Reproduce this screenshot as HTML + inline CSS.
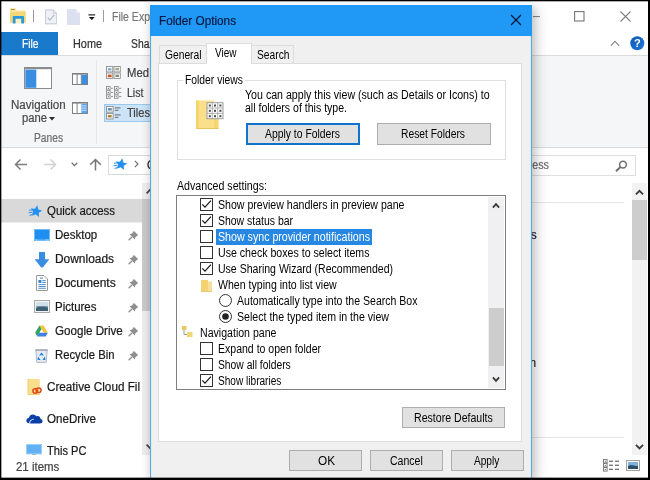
<!DOCTYPE html>
<html><head><meta charset="utf-8"><title>Folder Options</title>
<style>
html,body{margin:0;padding:0}
body{width:650px;height:480px;overflow:hidden;position:relative;background:#000;font-family:"Liberation Sans",sans-serif;font-size:12px}
.a{position:absolute}
.t{position:absolute;white-space:nowrap;line-height:16px;height:16px;transform-origin:0 50%}
.b{-webkit-text-stroke:.22px currentColor}
#root{position:absolute;left:0;top:0;width:650px;height:480px;overflow:hidden;will-change:transform}
</style></head><body><div id="root">
<!-- explorer window -->
<div class="a" style="left:1px;top:1px;width:647px;height:477px;background:#fff"></div>
<div class="a" style="left:1px;top:55px;width:647px;height:1px;background:#dadbdc"></div>
<div class="a" style="left:1px;top:56px;width:647px;height:91px;background:#f5f6f7"></div>
<div class="a" style="left:1px;top:147px;width:647px;height:1px;background:#dadbdc"></div>
<div class="a" style="left:1px;top:32px;width:57px;height:23px;background:#1979ca"></div>
<span class="t b" style="left:22.00px;top:36.00px;font-size:12px;color:#fff;transform:scaleX(0.8582);">File</span><span class="t b" style="left:72.70px;top:36.00px;font-size:12px;color:#333;transform:scaleX(0.9058);">Home</span><span class="t b" style="left:131.40px;top:36.00px;font-size:12px;color:#333;transform:scaleX(0.8614);">Sha</span><span class="t b" style="left:112.00px;top:8.60px;font-size:12px;color:#7a7a7a;transform:scaleX(0.8764);">File Exp</span>
<div class="a" style="left:33px;top:10px;width:1px;height:12px;background:#9a9a9a"></div>
<div class="a" style="left:103px;top:10px;width:1px;height:12px;background:#9a9a9a"></div>
<div class="a" style="left:96px;top:60px;width:1px;height:84px;background:#e6e7e8"></div>
<div class="a" style="left:104px;top:104px;width:60px;height:18px;background:#cce4f7;border:1px solid #99c9ef;box-sizing:border-box"></div>
<span class="t b" style="left:10.60px;top:97.40px;font-size:12px;color:#4a4a4a;transform:scaleX(0.9647);">Navigation</span><span class="t b" style="left:21.60px;top:110.30px;font-size:12px;color:#4a4a4a;transform:scaleX(0.9362);">pane</span><svg class="a" style="left:49.4px;top:117px" width="6" height="4" viewBox="0 0 6 4"><path d="M0 0 H6 L3 3.4Z" fill="#2b2b2b"/></svg><span class="t b" style="left:34.30px;top:130.00px;font-size:12px;color:#6d6d6d;transform:scaleX(0.8522);">Panes</span><span class="t b" style="left:127.30px;top:64.60px;font-size:12px;color:#424242;transform:scaleX(0.9424);">Med</span><span class="t b" style="left:127.30px;top:85.20px;font-size:12px;color:#424242;transform:scaleX(0.8776);">List</span><span class="t b" style="left:127.30px;top:105.00px;font-size:12px;color:#424242;transform:scaleX(0.9240);">Tiles</span>
<!-- address bar -->
<div class="a" style="left:108px;top:155px;width:60px;height:20px;border:1px solid #d9d9d9;box-sizing:border-box"></div>
<div class="a" style="left:500px;top:155px;width:136px;height:21px;border:1px solid #dfdfdf;box-sizing:border-box"></div>
<span class="t b" style="left:448.00px;top:156.80px;font-size:12px;color:#6d6d6d;transform:scaleX(0.8960);">Search Quick access</span>
<!-- nav pane -->
<span class="t b" style="left:146.60px;top:157.00px;font-size:12px;color:#222;transform:scaleX(0.9249);">Quick access</span>
<div class="a" style="left:1px;top:199px;width:141px;height:23px;background:#d9d9d9"></div><div class="a" style="left:1px;top:222px;width:141px;height:1px;background:#ececec"></div>
<div class="a" style="left:142px;top:183px;width:8px;height:272px;background:#efefef"></div>
<div class="a" style="left:142px;top:199px;width:8px;height:112px;background:#cbcbcb"></div>
<span class="t b" style="left:47.00px;top:203.00px;font-size:12px;color:#1a1a1a;transform:scaleX(0.9529);">Quick access</span><span class="t b" style="left:55.00px;top:227.00px;font-size:12px;color:#1a1a1a;transform:scaleX(0.9584);">Desktop</span><svg class="a" style="left:127.5px;top:229.5px" width="11" height="11" viewBox="0 0 10 10"><path d="M5.2 0.6 L9.4 4.8 L8.2 5.2 L6.6 6.8 L6.2 8.6 L1.4 3.8 L3.2 3.4 L4.8 1.8 Z" fill="#8f8f8f"/><path d="M3.6 6.4 L0.6 9.4" stroke="#8f8f8f" stroke-width="1.2"/></svg><span class="t b" style="left:55.00px;top:251.00px;font-size:12px;color:#1a1a1a;transform:scaleX(0.9937);">Downloads</span><svg class="a" style="left:127.5px;top:253.5px" width="11" height="11" viewBox="0 0 10 10"><path d="M5.2 0.6 L9.4 4.8 L8.2 5.2 L6.6 6.8 L6.2 8.6 L1.4 3.8 L3.2 3.4 L4.8 1.8 Z" fill="#8f8f8f"/><path d="M3.6 6.4 L0.6 9.4" stroke="#8f8f8f" stroke-width="1.2"/></svg><span class="t b" style="left:55.00px;top:275.00px;font-size:12px;color:#1a1a1a;">Documents</span><svg class="a" style="left:127.5px;top:277.5px" width="11" height="11" viewBox="0 0 10 10"><path d="M5.2 0.6 L9.4 4.8 L8.2 5.2 L6.6 6.8 L6.2 8.6 L1.4 3.8 L3.2 3.4 L4.8 1.8 Z" fill="#8f8f8f"/><path d="M3.6 6.4 L0.6 9.4" stroke="#8f8f8f" stroke-width="1.2"/></svg><span class="t b" style="left:55.00px;top:299.00px;font-size:12px;color:#1a1a1a;transform:scaleX(0.9571);">Pictures</span><svg class="a" style="left:127.5px;top:301.5px" width="11" height="11" viewBox="0 0 10 10"><path d="M5.2 0.6 L9.4 4.8 L8.2 5.2 L6.6 6.8 L6.2 8.6 L1.4 3.8 L3.2 3.4 L4.8 1.8 Z" fill="#8f8f8f"/><path d="M3.6 6.4 L0.6 9.4" stroke="#8f8f8f" stroke-width="1.2"/></svg><span class="t b" style="left:55.00px;top:323.00px;font-size:12px;color:#1a1a1a;transform:scaleX(0.9681);">Google Drive</span><svg class="a" style="left:127.5px;top:325.5px" width="11" height="11" viewBox="0 0 10 10"><path d="M5.2 0.6 L9.4 4.8 L8.2 5.2 L6.6 6.8 L6.2 8.6 L1.4 3.8 L3.2 3.4 L4.8 1.8 Z" fill="#8f8f8f"/><path d="M3.6 6.4 L0.6 9.4" stroke="#8f8f8f" stroke-width="1.2"/></svg><span class="t b" style="left:55.00px;top:347.00px;font-size:12px;color:#1a1a1a;transform:scaleX(0.9391);">Recycle Bin</span><svg class="a" style="left:127.5px;top:349.5px" width="11" height="11" viewBox="0 0 10 10"><path d="M5.2 0.6 L9.4 4.8 L8.2 5.2 L6.6 6.8 L6.2 8.6 L1.4 3.8 L3.2 3.4 L4.8 1.8 Z" fill="#8f8f8f"/><path d="M3.6 6.4 L0.6 9.4" stroke="#8f8f8f" stroke-width="1.2"/></svg><span class="t b" style="left:47.00px;top:379.00px;font-size:12px;color:#1a1a1a;transform:scaleX(0.9751);">Creative Cloud Fil</span><span class="t b" style="left:47.00px;top:411.00px;font-size:12px;color:#1a1a1a;transform:scaleX(0.9667);">OneDrive</span><span class="t b" style="left:47.00px;top:443.00px;font-size:12px;color:#1a1a1a;transform:scaleX(0.9253);">This PC</span><span class="t b" style="left:16.30px;top:459.00px;font-size:12px;color:#444;transform:scaleX(0.9546);">21 items</span>
<!-- content right -->
<div class="a" style="left:532px;top:202px;width:92px;height:1px;background:#e5e5e5"></div>
<div class="a" style="left:532px;top:437px;width:92px;height:1px;background:#e5e5e5"></div>
<div class="a" style="left:632px;top:183px;width:15px;height:272px;background:#f2f2f2"></div>
<div class="a" style="left:632px;top:200px;width:15px;height:60px;background:#cdcdcd"></div>
<span class="t b" style="left:497.00px;top:227.20px;font-size:12px;color:#141c3c;transform:scaleX(0.9896);">Folders</span><span class="t b" style="left:490.00px;top:354.50px;font-size:12px;color:#1a1a1a;transform:scaleX(0.8956);">Documen</span><!-- title bar icons -->
<svg class="a" style="left:10px;top:8px" width="16" height="16" viewBox="0 0 16 16"><path d="M0 .3 H5.6 L6.6 2.6 H15.6 V14.6 H0Z" fill="#f7e39a"/><path d="M0 4 H15.6 V14.6 H0Z" fill="#f4d878"/><rect x="1" y="1" width="3.6" height="1" fill="#9a8a4c"/><path d="M5.4 15.4 V10.6 H11.4 V15.4Z" fill="#f8efc8"/><path d="M2.8 15.4 V9 Q2.8 8 3.8 8 H13 Q14 8 14 9 V15.4 H11.3 V10.7 H5.5 V15.4Z" fill="#2a98dc"/></svg>
<svg class="a" style="left:45px;top:8.8px" width="12.2" height="15.8" viewBox="0 0 14 17"><path d="M.5 .5 H9.5 L13.5 4.5 V16.5 H.5Z" fill="#eff1f7" stroke="#b9c0ce"/><path d="M9.5 .5 V4.5 H13.5" fill="none" stroke="#c3c9d4"/><path d="M3.2 9.5 L5.8 12.2 L10.6 6.2" fill="none" stroke="#b4bccb" stroke-width="1.5"/></svg>
<svg class="a" style="left:67px;top:9px" width="13" height="16" viewBox="0 0 13 16"><path d="M0 0 H9 V4 H13 V16 H0Z" fill="#dde0ee"/><path d="M9 0 L13 4 H9Z" fill="#eceef6"/></svg>
<svg class="a" style="left:88px;top:14.3px" width="7.6" height="6.6" viewBox="0 0 9 7"><rect x="0.5" y="0" width="8" height="1.3" fill="#111"/><path d="M1 3 H8 L4.5 6.6Z" fill="#111"/></svg>
<!-- ribbon: navigation pane big icon -->
<svg class="a" style="left:24px;top:67px" width="28" height="22" viewBox="0 0 28 22"><rect x=".5" y="1" width="27" height="20.5" fill="#fff" stroke="#8c8c8c"/><rect x="0" y="0" width="28" height="2.2" fill="#8c8c8c"/><rect x="1.3" y="2.6" width="11" height="18.2" fill="#3a8ee2"/></svg>
<svg class="a" style="left:72px;top:73px" width="16" height="12" viewBox="0 0 16 12"><rect x=".5" y=".5" width="15" height="11" fill="#fff" stroke="#808080"/><rect x="0" y="0" width="16" height="1.6" fill="#808080"/><rect x="4.6" y="1" width="1" height="10.5" fill="#808080"/><rect x="9.4" y="1.8" width="5.8" height="9.4" fill="#3a8ee2"/><rect x="8.8" y="1" width=".8" height="10.5" fill="#808080"/></svg>
<svg class="a" style="left:72px;top:102px" width="16" height="12" viewBox="0 0 16 12"><rect x=".5" y=".5" width="15" height="11" fill="#fff" stroke="#808080"/><rect x="0" y="0" width="16" height="1.6" fill="#808080"/><rect x="4.6" y="1" width="1" height="10.5" fill="#808080"/><rect x="9.4" y="1.8" width="5.8" height="9.4" fill="#5aa3ea"/><g fill="#dcecfb"><rect x="10" y="3.4" width="4.6" height=".9"/><rect x="10" y="5.6" width="4.6" height=".9"/><rect x="10" y="7.8" width="4.6" height=".9"/></g></svg>
<!-- ribbon: layout icons -->
<svg class="a" style="left:106px;top:66px" width="15" height="13" viewBox="0 0 15 13"><g fill="#fff" stroke="#8e8e8e" stroke-width=".9"><rect x=".5" y=".5" width="6.3" height="5.4"/><rect x="8" y=".5" width="6.3" height="5.4"/><rect x=".5" y="7" width="6.3" height="5.4"/><rect x="8" y="7" width="6.3" height="5.4"/></g><rect x="1.8" y="2.2" width="3.6" height="2.2" fill="#7aa9c9"/><rect x="9.4" y="1.8" width="3.6" height="2.6" fill="#a8a58a"/><rect x="1.8" y="8.6" width="3.8" height="2.6" fill="#c65a2c"/><rect x="9.4" y="8.6" width="3.6" height="2.4" fill="#8d8d7a"/></svg>
<svg class="a" style="left:106px;top:86px" width="16" height="13" viewBox="0 0 16 13"><g fill="#fff" stroke="#8e8e8e" stroke-width=".9"><rect x=".5" y=".5" width="3.6" height="3.4"/><rect x=".5" y="4.7" width="3.6" height="3.4"/><rect x=".5" y="8.9" width="3.6" height="3.4"/><rect x="8.5" y=".5" width="3.6" height="3.4"/><rect x="8.5" y="4.7" width="3.6" height="3.4"/><rect x="8.5" y="8.9" width="3.6" height="3.4"/></g><g fill="#555"><rect x="1.8" y="1.8" width="1" height="1"/><rect x="1.8" y="6" width="1" height="1"/><rect x="1.8" y="10.2" width="1" height="1"/><rect x="9.8" y="1.8" width="1" height="1"/><rect x="9.8" y="6" width="1" height="1"/><rect x="9.8" y="10.2" width="1" height="1"/></g><g fill="#8e8e8e"><rect x="5" y="1.8" width="2" height=".9"/><rect x="5" y="6" width="2" height=".9"/><rect x="5" y="10.2" width="2" height=".9"/><rect x="13" y="1.8" width="2.4" height=".9"/><rect x="13" y="6" width="2.4" height=".9"/><rect x="13" y="10.2" width="2.4" height=".9"/></g></svg>
<svg class="a" style="left:106px;top:106px" width="15" height="14" viewBox="0 0 15 14"><g fill="#fff" stroke="#8e8e8e" stroke-width=".9"><rect x=".5" y=".5" width="6.6" height="5.6"/><rect x=".5" y="7.4" width="6.6" height="5.6"/></g><rect x="1.8" y="2" width="4" height="2.6" fill="#6c93b0"/><rect x="1.8" y="8.9" width="4" height="2.6" fill="#a8a04c"/><rect x="2.4" y="9.6" width="2" height="1.4" fill="#c65a2c"/><g fill="#6a6a6a"><rect x="8.8" y="1.4" width="5.8" height="1"/><rect x="8.8" y="3.8" width="3.6" height="1"/><rect x="8.8" y="8.4" width="5.8" height="1"/><rect x="8.8" y="10.8" width="3.6" height="1"/></g></svg>
<!-- address bar arrows -->
<svg class="a" style="left:14px;top:158px" width="14" height="13" viewBox="0 0 14 13"><path d="M13 6.5 H2 M6.5 1.5 L1.5 6.5 L6.5 11.5" fill="none" stroke="#7d7d7d" stroke-width="1.5"/></svg>
<svg class="a" style="left:43px;top:158px" width="14" height="13" viewBox="0 0 14 13"><path d="M1 6.5 H12 M7.5 1.5 L12.5 6.5 L7.5 11.5" fill="none" stroke="#d2d2d2" stroke-width="1.5"/></svg>
<svg class="a" style="left:71px;top:162px" width="7" height="5" viewBox="0 0 7 5"><path d="M.7 .8 L3.5 3.6 L6.3 .8" fill="none" stroke="#707070" stroke-width="1.3"/></svg>
<svg class="a" style="left:89px;top:158px" width="13" height="13" viewBox="0 0 13 13"><path d="M6.5 12.5 V2 M1.2 6.8 L6.5 1.5 L11.8 6.8" fill="none" stroke="#757575" stroke-width="1.5"/></svg>
<svg class="a" style="left:113px;top:157px" width="14" height="14" viewBox="0 0 14 14"><path d="M9.29 1.20 L10.29 5.39 L14.44 6.52 L10.76 8.76 L10.96 13.06 L7.70 10.26 L3.67 11.78 L5.33 7.80 L2.64 4.44 L6.93 4.79Z" fill="#2490ee"/><path d="M1 6.2 L4.4 6 M.6 8.8 L4.6 8.2 M1.6 11.6 L5 10.2" stroke="#3a97ea" stroke-width="1.1" fill="none"/></svg>
<svg class="a" style="left:134px;top:160px" width="5" height="8" viewBox="0 0 5 8"><path d="M.8 .8 L4 4 L.8 7.2" fill="none" stroke="#707070" stroke-width="1.2"/></svg>
<!-- nav: quick access star -->
<svg class="a" style="left:28px;top:204px" width="14" height="14" viewBox="0 0 14 14"><path d="M9.29 1.20 L10.29 5.39 L14.44 6.52 L10.76 8.76 L10.96 13.06 L7.70 10.26 L3.67 11.78 L5.33 7.80 L2.64 4.44 L6.93 4.79Z" fill="#2490ee"/><path d="M1 6.2 L4.4 6 M.6 8.8 L4.6 8.2 M1.6 11.6 L5 10.2" stroke="#3a97ea" stroke-width="1.1" fill="none"/></svg>
<!-- nav icons -->
<svg class="a" style="left:34px;top:229px" width="16" height="12" viewBox="0 0 16 12"><rect x="0" y="0" width="16" height="12" fill="#6cbcf7"/><rect x="1" y="1" width="14" height="9.4" fill="#1e8ff0"/><g fill="#fff"><rect x="2" y="10.6" width="1" height=".8"/><rect x="12" y="10.6" width="1" height=".8"/><rect x="13.6" y="10.6" width="1" height=".8"/></g></svg>
<svg class="a" style="left:34px;top:251.5px" width="16" height="16" viewBox="0 0 16 16"><path d="M5 0 H11 V7.3 H15.4 L8.8 15.4 H7.2 L.6 7.3 H5Z" fill="#3a8ee2"/></svg>
<svg class="a" style="left:36px;top:275px" width="12" height="16" viewBox="0 0 12 16"><path d="M.5 .5 H8 L11.5 4 V15.5 H.5Z" fill="#fff" stroke="#9a9a9a"/><g fill="#3f86c9"><rect x="4" y="2.6" width="3" height="1"/><rect x="2.4" y="5" width="3" height="3"/><rect x="6.2" y="5.2" width="3.6" height=".9"/><rect x="6.2" y="7" width="3.6" height=".9"/><rect x="2.4" y="9.2" width="7.4" height=".9"/><rect x="2.4" y="11" width="7.4" height=".9"/><rect x="2.4" y="12.8" width="7.4" height=".9"/></g></svg>
<svg class="a" style="left:34px;top:300px" width="16" height="13" viewBox="0 0 16 13"><rect x=".5" y=".5" width="15" height="12" fill="#f4f4f4" stroke="#a9a9a9"/><rect x="2" y="2" width="12" height="9" fill="#cfe0ea"/><rect x="2" y="6.2" width="12" height="4.8" fill="#3d6174"/><path d="M2 8 Q6 5.4 14 7.4 V6.2 H2Z" fill="#8fb0c2"/></svg>
<svg class="a" style="left:35px;top:324.6px" width="13" height="12.2" viewBox="0 0 14 13"><path d="M4.8 .4 H9.2 L13.8 8.4 H9.4Z" fill="#f6c338"/><path d="M4.8 .4 L.2 8.4 L2.4 12.2 L7 4.2Z" fill="#2fa463"/><path d="M4.6 8.4 H13.8 L11.6 12.2 H2.4Z" fill="#3f7fe0"/></svg>
<svg class="a" style="left:35.3px;top:349px" width="13" height="14" viewBox="0 0 13 14"><path d="M.8 1 H12.2 L11.2 13.4 H1.8Z" fill="#e3eaf3" stroke="#aab2be" stroke-width=".9"/><rect x=".3" y=".4" width="12.4" height="1.3" fill="#9aa2ae"/><path d="M6.5 3.4 L8.9 6.6 H4.1Z M3 7.4 L5.6 11 H2.6Z M10 7.4 L10.4 11 H7.4Z" fill="#1e7fe0"/><circle cx="6.5" cy="7.6" r="1.3" fill="#e3eaf3"/></svg>
<svg class="a" style="left:27px;top:378.6px" width="16" height="17" viewBox="0 0 16 17"><path d="M1 0 H11.4 Q12.8 0 12.8 1.4 V15.6 H1Z" fill="#f9df8c"/><path d="M1 0 V15.6 H12.8" fill="none" stroke="#ecc864" stroke-width=".9"/><g fill="none" stroke="#e2491b" stroke-width="1.5"><ellipse cx="8.2" cy="12" rx="2.3" ry="2.2"/><ellipse cx="11.6" cy="11.2" rx="2.5" ry="2.3"/></g></svg>
<svg class="a" style="left:26px;top:413px" width="17" height="11" viewBox="0 0 17 11"><path d="M4.6 10.6 Q.3 10.6 .3 7.6 Q.3 5.2 3 4.8 Q3.6 1.4 7 1.4 Q9.2 1.4 10.4 3.2 Q14 2.4 14.6 6 Q16.8 6.4 16.6 8.6 Q16.4 10.6 14 10.6Z" fill="#0b3fa8"/><path d="M3.6 10.6 Q3.2 7 6.6 6.4 Q7.2 6.2 7.8 6.4" fill="none" stroke="#fff" stroke-width=".9"/></svg>
<svg class="a" style="left:26px;top:444px" width="16" height="11" viewBox="0 0 16 11"><rect x="0" y="0" width="16" height="10.4" fill="#9ad0f8"/><rect x="1" y="1" width="14" height="8.4" fill="#62b2f3"/><rect x="6" y="10.2" width="4" height=".8" fill="#9aa"/></svg>
<!-- search magnifier -->
<svg class="a" style="left:615px;top:160px" width="13" height="12" viewBox="0 0 13 12"><circle cx="8" cy="4.6" r="3.4" fill="none" stroke="#707070" stroke-width="1.5"/><path d="M5.4 7 L1 11.2" stroke="#707070" stroke-width="1.9"/></svg>
<!-- explorer window controls -->
<svg class="a" style="left:532.5px;top:15.6px" width="7" height="2" viewBox="0 0 7 2"><rect width="7" height="1.1" fill="#8a8a8a"/></svg>
<svg class="a" style="left:574px;top:11px" width="11" height="11" viewBox="0 0 11 11"><rect x=".6" y=".6" width="9.4" height="9.4" fill="none" stroke="#777" stroke-width="1.1"/></svg>
<svg class="a" style="left:620px;top:11px" width="11" height="11" viewBox="0 0 11 11"><path d="M.5 .5 L10.5 10.5 M10.5 .5 L.5 10.5" stroke="#808080" stroke-width="1.1" fill="none"/></svg>
<svg class="a" style="left:610px;top:40px" width="10" height="7" viewBox="0 0 10 7"><path d="M.8 5.8 L5 1.4 L9.2 5.8" fill="none" stroke="#858585" stroke-width="1.1"/></svg>
<svg class="a" style="left:630px;top:36px" width="15" height="15" viewBox="0 0 15 15"><defs><linearGradient id="hg" x1="0" y1="0" x2="1" y2="1"><stop offset="0" stop-color="#0f58b4"/><stop offset="1" stop-color="#1c78dc"/></linearGradient></defs><circle cx="7.3" cy="7.3" r="7" fill="url(#hg)"/><text x="7.3" y="11.3" text-anchor="middle" font-family="Liberation Sans, sans-serif" font-weight="700" font-size="11" fill="#fff">?</text></svg>
<!-- scrollbar arrows -->
<svg class="a" style="left:635.3px;top:188.6px" width="9" height="7.2" viewBox="0 0 10 8"><path d="M1 6 L5 2 L9 6" fill="none" stroke="#3a3a3a" stroke-width="2"/></svg>
<svg class="a" style="left:635.3px;top:443.2px" width="9" height="7.2" viewBox="0 0 10 8"><path d="M1 2 L5 6 L9 2" fill="none" stroke="#3a3a3a" stroke-width="2"/></svg>
<svg class="a" style="left:145.6px;top:187px" width="8" height="8" viewBox="0 0 8 8"><path d="M.6 6.4 L4.6 2.2 L8 5.8" fill="none" stroke="#404040" stroke-width="1.7"/></svg>
<svg class="a" style="left:145.6px;top:443px" width="8" height="8" viewBox="0 0 8 8"><path d="M.6 1.6 L4.6 5.8 L8 2.2" fill="none" stroke="#404040" stroke-width="1.7"/></svg>
<!-- status bar view icons -->
<svg class="a" style="left:603px;top:459px" width="17" height="13" viewBox="0 0 17 13"><g fill="#fff" stroke="#808080" stroke-width="1"><rect x=".5" y=".5" width="3.6" height="3.4"/><rect x=".5" y="4.5" width="3.6" height="3.4"/><rect x=".5" y="8.5" width="3.6" height="3.6"/></g><g fill="#555"><rect x="1.8" y="1.8" width="1" height="1"/><rect x="1.8" y="5.8" width="1" height="1"/><rect x="1.8" y="9.9" width="1" height="1"/></g><g fill="#6e6e6e"><rect x="6" y="1.6" width="4" height="1.3"/><rect x="12" y="1.6" width="4" height="1.3"/><rect x="6" y="5.6" width="4" height="1.3"/><rect x="12" y="5.6" width="4" height="1.3"/><rect x="6" y="9.7" width="4" height="1.3"/><rect x="12" y="9.7" width="4" height="1.3"/></g></svg>
<svg class="a" style="left:626px;top:460px" width="14" height="11" viewBox="0 0 14 11"><rect x=".5" y=".5" width="13" height="10" fill="#fafafa" stroke="#a2a2a2"/><rect x="2" y="2" width="10" height="7" fill="#7fb2dc"/><path d="M2 9 V6 Q5 4 8 5.6 Q10 6.6 12 5.4 V9Z" fill="#2f4f66"/></svg>

<!-- dialog -->
<div class="a" style="left:150px;top:5px;width:380px;height:474px;background:#f0f0f0;border:1px solid #6ba5cc;border-top:none;box-shadow:5px 2px 12px 0 rgba(0,0,10,.17),0 0 9px 0 rgba(0,0,10,.15),inset 1px 0 0 #d6f0fb,inset -1px 0 0 #d6f0fb"></div>
<div class="a" style="left:144px;top:2px;width:394px;height:3px;background:linear-gradient(90deg,rgba(255,255,255,0),#f1f7fd 6px,#f1f7fd 388px,rgba(255,255,255,0))"></div>
<div class="a" style="left:150px;top:5px;width:382px;height:31px;background:#1f99f5"></div>
<span class="t b" style="left:159.40px;top:13.00px;font-size:12px;color:#0a1a45;transform:scaleX(0.9784);">Folder Options</span>
<svg class="a" style="left:510px;top:14px" width="12" height="12" viewBox="0 0 12 12"><path d="M1 1 L11 11 M11 1 L1 11" stroke="#0c1530" stroke-width="1.15" fill="none"/></svg>
<!-- tabs -->
<div class="a" style="left:158px;top:63px;width:364px;height:379px;background:#fff;border:1px solid #dcdcdc;box-sizing:border-box"></div>
<div class="a" style="left:159px;top:45px;width:48px;height:18px;background:#f0f0f0;border:1px solid #dcdcdc;border-bottom:none;box-sizing:border-box"></div>
<div class="a" style="left:251px;top:45px;width:43px;height:18px;background:#f0f0f0;border:1px solid #dcdcdc;border-bottom:none;box-sizing:border-box"></div>
<div class="a" style="left:206px;top:43px;width:46px;height:21px;background:#fff;border:1px solid #dcdcdc;border-bottom:none;box-sizing:border-box"></div>
<span class="t" style="left:164.80px;top:46.50px;font-size:12px;color:#000;transform:scaleX(0.8547);">General</span><span class="t" style="left:214.50px;top:44.50px;font-size:12px;color:#000;transform:scaleX(0.8334);">View</span><span class="t" style="left:257.00px;top:46.50px;font-size:12px;color:#000;transform:scaleX(0.8546);">Search</span>
<!-- group box -->
<div class="a" style="left:177px;top:80px;width:329px;height:80px;border:1px solid #dfdfdf;box-sizing:border-box"></div>
<div class="a" style="left:183px;top:74px;width:62px;height:12px;background:#fff"></div>
<span class="t" style="left:185.00px;top:72.00px;font-size:12px;color:#000;transform:scaleX(0.8611);">Folder views</span><span class="t" style="left:245.30px;top:87.00px;font-size:12px;color:#000;transform:scaleX(0.8854);">You can apply this view (such as Details or Icons) to</span><span class="t" style="left:245.30px;top:99.50px;font-size:12px;color:#000;transform:scaleX(0.8788);">all folders of this type.</span><div class="a" style="left:246px;top:123px;width:110px;height:18px;background:#e1e1e1;border:2px solid #1273cf"></div><div class="a" style="left:377px;top:123px;width:112px;height:20px;background:#e1e1e1;border:1px solid #adadad"></div><span class="t" style="left:265.00px;top:126.00px;font-size:12px;color:#000;transform:scaleX(0.8649);">Apply to Folders</span><span class="t" style="left:401.25px;top:126.00px;font-size:12px;color:#000;transform:scaleX(0.8567);">Reset Folders</span>
<svg class="a" style="left:196px;top:99.5px" width="28" height="30" viewBox="0 0 28 30"><path d="M0 0.5 H18 V29 H0Z" fill="#fbe08c"/><path d="M0 0.5 H3 V29 H0Z" fill="#f8d46c"/><path d="M18 2.5 H22.6 V29 H18Z" fill="#f9d570"/><path d="M0 28h22.6v1H0z" fill="#eec55c"/><rect x="11" y="2.7" width="16" height="16" fill="#fff" stroke="#9c9c9c" stroke-width="1"/><path d="M16.3 2.7 V18.7 M21.7 2.7 V18.7 M11 8 H27 M11 13.4 H27" stroke="#a8a8a8" stroke-width=".9" fill="none"/><g fill="#4a4a4a"><rect x="12.8" y="4.5" width="2" height="2"/><rect x="18" y="4.5" width="2" height="2"/><rect x="23.4" y="4.5" width="2" height="2"/><rect x="12.8" y="9.8" width="2" height="2"/><rect x="18" y="9.8" width="2" height="2"/><rect x="23.4" y="9.8" width="2" height="2"/><rect x="12.8" y="15.2" width="2" height="2"/><rect x="18" y="15.2" width="2" height="2"/><rect x="23.4" y="15.2" width="2" height="2"/></g></svg>
<span class="t" style="left:176.50px;top:177.50px;font-size:12px;color:#000;transform:scaleX(0.8875);">Advanced settings:</span>
<!-- list box -->
<div class="a" style="left:176px;top:195px;width:330px;height:195px;background:#fff;border:1px solid #7f7f7f;box-sizing:border-box"></div>
<div class="a" style="left:488px;top:197px;width:16px;height:191px;background:#f0f0f2"></div>
<div class="a" style="left:489px;top:308px;width:15px;height:58px;background:#cdcdcd"></div>
<svg class="a" style="left:491.6px;top:202.4px" width="8" height="7" viewBox="0 0 8 7"><path d="M.9 5.6 L4 2.2 L7.1 5.6" fill="none" stroke="#3c3c3c" stroke-width="1.9"/></svg>
<svg class="a" style="left:491.6px;top:376px" width="8" height="7" viewBox="0 0 8 7"><path d="M.9 1.4 L4 4.8 L7.1 1.4" fill="none" stroke="#3c3c3c" stroke-width="1.9"/></svg>
<svg class="a" style="left:200px;top:198px" width="13" height="13" viewBox="0 0 13 13"><rect x=".5" y=".5" width="12" height="12" fill="#fff" stroke="#333"/><path d="M2.3 6.4 L5 9.2 L10.9 2.7" fill="none" stroke="#1a1a1a" stroke-width="1.25"/></svg><span class="t" style="left:218.30px;top:197.00px;font-size:12px;color:#000;transform:scaleX(0.8820);">Show preview handlers in preview pane</span><svg class="a" style="left:200px;top:214px" width="13" height="13" viewBox="0 0 13 13"><rect x=".5" y=".5" width="12" height="12" fill="#fff" stroke="#333"/><path d="M2.3 6.4 L5 9.2 L10.9 2.7" fill="none" stroke="#1a1a1a" stroke-width="1.25"/></svg><span class="t" style="left:218.30px;top:213.00px;font-size:12px;color:#000;transform:scaleX(0.8716);">Show status bar</span><div class="a" style="left:216px;top:229px;width:156px;height:16px;background:#2788e4"></div><svg class="a" style="left:200px;top:230px" width="13" height="13" viewBox="0 0 13 13"><rect x=".5" y=".5" width="12" height="12" fill="#fff" stroke="#333"/></svg><span class="t" style="left:218.30px;top:229.00px;font-size:12px;color:#fff;transform:scaleX(0.8867);">Show sync provider notifications</span><svg class="a" style="left:200px;top:246px" width="13" height="13" viewBox="0 0 13 13"><rect x=".5" y=".5" width="12" height="12" fill="#fff" stroke="#333"/></svg><span class="t" style="left:218.30px;top:245.00px;font-size:12px;color:#000;transform:scaleX(0.8839);">Use check boxes to select items</span><svg class="a" style="left:200px;top:262px" width="13" height="13" viewBox="0 0 13 13"><rect x=".5" y=".5" width="12" height="12" fill="#fff" stroke="#333"/><path d="M2.3 6.4 L5 9.2 L10.9 2.7" fill="none" stroke="#1a1a1a" stroke-width="1.25"/></svg><span class="t" style="left:218.30px;top:261.00px;font-size:12px;color:#000;transform:scaleX(0.8776);">Use Sharing Wizard (Recommended)</span><svg class="a" style="left:201px;top:279px" width="12" height="13" viewBox="0 0 12 13"><path d="M0 1 H7 V12 H0Z" fill="#f3d272"/><path d="M7 2.5 H11 V12 H7Z" fill="#f7e19a"/><path d="M0 12h11v.8H0z" fill="#e3bd55"/></svg><span class="t" style="left:218.30px;top:277.00px;font-size:12px;color:#000;transform:scaleX(0.8810);">When typing into list view</span><svg class="a" style="left:219px;top:294px" width="13" height="13" viewBox="0 0 13 13"><circle cx="6.5" cy="6.5" r="6" fill="#fff" stroke="#333"/></svg><span class="t" style="left:237.00px;top:293.00px;font-size:12px;color:#000;transform:scaleX(0.8785);">Automatically type into the Search Box</span><svg class="a" style="left:219px;top:310px" width="13" height="13" viewBox="0 0 13 13"><circle cx="6.5" cy="6.5" r="6" fill="#fff" stroke="#333"/><circle cx="6.5" cy="6.5" r="3.3" fill="#222"/></svg><span class="t" style="left:237.00px;top:309.00px;font-size:12px;color:#000;transform:scaleX(0.8832);">Select the typed item in the view</span><svg class="a" style="left:182px;top:326px" width="11" height="12" viewBox="0 0 11 12"><rect x="0" y="0" width="4.5" height="4" fill="#e8c95c"/><rect x="5" y="6" width="5.5" height="5" fill="#f0d772"/><path d="M2 4 V8.5 H5" fill="none" stroke="#9a9a9a" stroke-width="1"/></svg><span class="t" style="left:199.70px;top:325.00px;font-size:12px;color:#000;transform:scaleX(0.8820);">Navigation pane</span><svg class="a" style="left:200px;top:342px" width="13" height="13" viewBox="0 0 13 13"><rect x=".5" y=".5" width="12" height="12" fill="#fff" stroke="#333"/></svg><span class="t" style="left:218.30px;top:341.00px;font-size:12px;color:#000;transform:scaleX(0.8772);">Expand to open folder</span><svg class="a" style="left:200px;top:358px" width="13" height="13" viewBox="0 0 13 13"><rect x=".5" y=".5" width="12" height="12" fill="#fff" stroke="#333"/></svg><span class="t" style="left:218.30px;top:357.00px;font-size:12px;color:#000;transform:scaleX(0.8587);">Show all folders</span><svg class="a" style="left:200px;top:374px" width="13" height="13" viewBox="0 0 13 13"><rect x=".5" y=".5" width="12" height="12" fill="#fff" stroke="#333"/><path d="M2.3 6.4 L5 9.2 L10.9 2.7" fill="none" stroke="#1a1a1a" stroke-width="1.25"/></svg><span class="t" style="left:218.30px;top:373.00px;font-size:12px;color:#000;transform:scaleX(0.8411);">Show libraries</span><div class="a" style="left:402px;top:407px;width:101px;height:19px;background:#e1e1e1;border:1px solid #adadad"></div><span class="t" style="left:414.00px;top:409.50px;font-size:12px;color:#000;transform:scaleX(0.8817);">Restore Defaults</span><div class="a" style="left:289px;top:450px;width:71px;height:19px;background:#e1e1e1;border:1px solid #adadad"></div><div class="a" style="left:370px;top:450px;width:71px;height:19px;background:#e1e1e1;border:1px solid #adadad"></div><div class="a" style="left:451px;top:450px;width:71px;height:19px;background:#e1e1e1;border:1px solid #adadad"></div><span class="t" style="left:317.50px;top:452.50px;font-size:12px;color:#000;transform:scaleX(0.9802);">OK</span><span class="t" style="left:389.70px;top:452.50px;font-size:12px;color:#000;transform:scaleX(0.8780);">Cancel</span><span class="t" style="left:474.00px;top:452.50px;font-size:12px;color:#000;transform:scaleX(0.8425);">Apply</span>
<!-- outer black frame -->
<div class="a" style="left:0;top:0;width:650px;height:1px;background:#000"></div><div class="a" style="left:0;top:1px;width:650px;height:1px;background:rgba(0,0,0,.3)"></div>
<div class="a" style="left:0;top:0;width:1px;height:480px;background:#000"></div><div class="a" style="left:1px;top:0;width:1px;height:480px;background:rgba(0,0,0,.35)"></div>
<div class="a" style="left:648px;top:0;width:1px;height:480px;background:rgba(0,0,0,.6)"></div><div class="a" style="left:649px;top:0;width:1px;height:480px;background:#000"></div>
<div class="a" style="left:0;top:477px;width:650px;height:1px;background:rgba(0,0,0,.35)"></div><div class="a" style="left:0;top:478px;width:650px;height:2px;background:#000"></div>
</div></body></html>
